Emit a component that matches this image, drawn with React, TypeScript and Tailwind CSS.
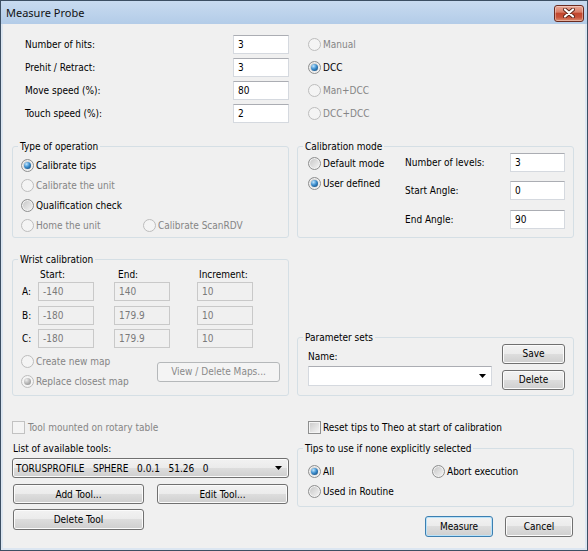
import React from "react";

function Radio({ label, checked, disabled }: { label: string; checked?: boolean; disabled?: boolean }) {
  return (
    <div className="flex items-center h-full">
      <span
        className={
          disabled
            ? "shrink-0 flex items-center justify-center w-[13px] h-[13px] rounded-full border border-[#bdbdbd] bg-[#f4f4f4]"
            : "shrink-0 flex items-center justify-center w-[13px] h-[13px] rounded-full border border-[#8e8f8f] bg-[linear-gradient(135deg,#c4c4c4,#f6f6f6)] shadow-[inset_0_0_0_1px_#f2f2f2]"
        }
      >
        {checked ? (
          <span
            className={
              disabled
                ? "w-[7px] h-[7px] rounded-full bg-[radial-gradient(circle_at_35%_30%,#ececec,#a6a6a6_65%,#8c8c8c)]"
                : "w-[7px] h-[7px] rounded-full bg-[radial-gradient(circle_at_35%_30%,#bfe6ff,#3b8dcd_45%,#0d3a66)]"
            }
          />
        ) : null}
      </span>
      <span className={disabled ? "ml-[2px] text-[#858585] whitespace-nowrap" : "ml-[2px] text-black whitespace-nowrap"}>{label}</span>
    </div>
  );
}

function TextBox({ value, className, disabled }: { value: string; className: string; disabled?: boolean }) {
  return (
    <div
      className={
        (disabled
          ? "h-[19px] flex items-center pl-[4px] bg-[#f0f0f0] border border-[#c9c9c9] text-[#7a7a7a] "
          : "h-[19px] flex items-center pl-[4px] bg-white border border-[#d5d9df] border-t-[#abadb3] text-black ") + className
      }
    >
      {value}
    </div>
  );
}

function Btn({ label, className, disabled, def }: { label: string; className: string; disabled?: boolean; def?: boolean }) {
  let base = "flex items-center justify-center rounded-[3px] border whitespace-nowrap ";
  if (disabled) base += "border-[#b5b8ba] bg-[#f4f4f4] text-[#8a8a8a] ";
  else if (def)
    base +=
      "border-[#3c7fb1] bg-[linear-gradient(to_bottom,#f2f2f2_0%,#ebebeb_50%,#dddddd_50%,#cfcfcf_100%)] shadow-[inset_0_0_0_1px_#b9e2f9] text-black ";
  else
    base +=
      "border-[#707070] bg-[linear-gradient(to_bottom,#f2f2f2_0%,#ebebeb_50%,#dddddd_50%,#cfcfcf_100%)] shadow-[inset_0_0_0_1px_#fbfbfb] text-black ";
  return <div className={base + className}>{label}</div>;
}

function Arrow() {
  return (
    <svg width="7" height="4" viewBox="0 0 7 4">
      <path d="M0 0H7L3.5 4Z" fill="#000" />
    </svg>
  );
}

function Legend({ children }: { children: React.ReactNode }) {
  return <legend className="ml-[5px] px-[2px] leading-[13px] text-black">{children}</legend>;
}

export default function App() {
  return (
    <div className="w-[588px] h-[551px] flex flex-col bg-[#f0f0f0] border border-[#3c4f63] text-[10px] leading-[13px] text-black font-['DejaVu_Sans_Condensed','DejaVu_Sans',sans-serif]">
      {/* Title bar */}
      <div className="h-[23px] shrink-0 flex items-center justify-between pl-[5px] pr-[3px] bg-[linear-gradient(to_bottom,#c8dbf0,#b3cce8)]">
        <span className="font-['Noto_Sans','Open_Sans',sans-serif] text-[11px] leading-[16px] text-[#111]">Measure Probe</span>
        <div className="w-[30px] h-[17px] mt-[1px] rounded-[3px] border border-[#6a2b20] flex items-center justify-center bg-[linear-gradient(to_bottom,#e9a896_0%,#d97f69_40%,#c2472e_50%,#c7523a_75%,#dd8e70_100%)] shadow-[inset_0_0_0_1px_rgba(255,255,255,0.35)]">
          <svg width="12" height="10" viewBox="0 0 12 10">
            <path d="M2 1.5L10 8.5M10 1.5L2 8.5" stroke="#5a2418" strokeWidth="4" strokeLinecap="round" />
            <path d="M2 1.5L10 8.5M10 1.5L2 8.5" stroke="#ffffff" strokeWidth="2.2" strokeLinecap="round" />
          </svg>
        </div>
      </div>

      {/* Body */}
      <div className="flex-1 flex flex-col border-x-2 border-b-2 border-[#dce6f1] pl-[9px] pt-[11px]">
        {/* Row 1 */}
        <div className="flex gap-[8px]">
          <div className="w-[277px] flex flex-col gap-[4px]">
            {[
              ["Number of hits:", "3"],
              ["Prehit / Retract:", "3"],
              ["Move speed (%):", "80"],
              ["Touch speed (%):", "2"],
            ].map(([l, v]) => (
              <div key={l} className="flex items-center h-[19px]">
                <span className="flex-1 pl-[13px]">{l}</span>
                <TextBox value={v} className="w-[56px]" />
              </div>
            ))}
          </div>
          <div className="w-[277px] pl-[11px] flex flex-col gap-[4px]">
            <div className="h-[19px]">
              <Radio label="Manual" disabled />
            </div>
            <div className="h-[19px]">
              <Radio label="DCC" checked />
            </div>
            <div className="h-[19px]">
              <Radio label="Man+DCC" disabled />
            </div>
            <div className="h-[19px]">
              <Radio label="DCC+DCC" disabled />
            </div>
          </div>
        </div>

        {/* Row 2 */}
        <div className="flex gap-[8px] mt-[16.5px]">
          <fieldset className="w-[277px] h-[98.5px] border border-[#d5dfe5] rounded-[3px] p-0 m-0">
            <Legend>Type of operation</Legend>
            <div className="pt-[2.5px] pl-[8px] flex flex-col">
              <div className="h-[20px]">
                <Radio label="Calibrate tips" checked />
              </div>
              <div className="h-[20px]">
                <Radio label="Calibrate the unit" disabled />
              </div>
              <div className="h-[20px]">
                <Radio label="Qualification check" />
              </div>
              <div className="h-[20px] flex">
                <div className="w-[122px]">
                  <Radio label="Home the unit" disabled />
                </div>
                <div>
                  <Radio label="Calibrate ScanRDV" disabled />
                </div>
              </div>
            </div>
          </fieldset>
          <fieldset className="w-[277px] h-[98.5px] border border-[#d5dfe5] rounded-[3px] p-0 m-0">
            <Legend>Calibration mode</Legend>
            <div className="flex">
              <div className="w-[107px] pl-[10px] pt-[0.5px] flex flex-col">
                <div className="h-[20px]">
                  <Radio label="Default mode" />
                </div>
                <div className="h-[20px]">
                  <Radio label="User defined" checked />
                </div>
              </div>
              <div className="flex flex-col gap-[9.5px]">
                {[
                  ["Number of levels:", "3"],
                  ["Start Angle:", "0"],
                  ["End Angle:", "90"],
                ].map(([l, v]) => (
                  <div key={l} className="flex items-center h-[19px]">
                    <span className="w-[105px]">{l}</span>
                    <TextBox value={v} className="w-[55px]" />
                  </div>
                ))}
              </div>
            </div>
          </fieldset>
        </div>

        {/* Row 3 */}
        <div className="flex gap-[8px] items-end mt-[14.5px]">
          <fieldset className="w-[277px] h-[143.5px] border border-[#d5dfe5] rounded-[3px] p-0 m-0">
            <Legend>Wrist calibration</Legend>
            <div className="pl-[9px] flex flex-col">
              <div className="mt-[2px] h-[13px] flex">
                <span className="w-[16px]" />
                <span className="w-[76px] pl-[2px]">Start:</span>
                <span className="w-[83px] pl-[4px]">End:</span>
                <span className="pl-[2px]">Increment:</span>
              </div>
              <div className="mt-[1.5px] flex flex-col gap-[4.5px]">
                {[
                  ["A:", "-140", "140", "10"],
                  ["B:", "-180", "179.9", "10"],
                  ["C:", "-180", "179.9", "10"],
                ].map(([l, a, b, c]) => (
                  <div key={l} className="flex items-center h-[19px]">
                    <span className="w-[16px]">{l}</span>
                    <TextBox value={a} className="w-[56px]" disabled />
                    <TextBox value={b} className="w-[56px] ml-[20px]" disabled />
                    <TextBox value={c} className="w-[56px] ml-[27px]" disabled />
                  </div>
                ))}
              </div>
              <div className="mt-[3.5px] flex items-center">
                <div className="w-[136px] ml-[-1px] flex flex-col">
                  <div className="h-[20px]">
                    <Radio label="Create new map" disabled />
                  </div>
                  <div className="h-[20px]">
                    <Radio label="Replace closest map" checked disabled />
                  </div>
                </div>
                <Btn label="View / Delete Maps..." className="w-[123px] h-[20px]" disabled />
              </div>
            </div>
          </fieldset>
          <fieldset className="w-[277px] h-[65.5px] border border-[#d5dfe5] rounded-[3px] p-0 m-0">
            <Legend>Parameter sets</Legend>
            <div className="flex justify-between pl-[10px] pr-[8px]">
              <div className="flex flex-col">
                <span className="mt-[6px] h-[13px]">Name:</span>
                <div className="mt-[3.5px] w-[184px] h-[20px] bg-white border border-[#d5d9df] border-t-[#abadb3] flex items-center justify-end pr-[5px]">
                  <Arrow />
                </div>
              </div>
              <div className="flex flex-col gap-[6px]">
                <Btn label="Save" className="w-[63px] h-[20px]" />
                <Btn label="Delete" className="w-[63px] h-[20px]" />
              </div>
            </div>
          </fieldset>
        </div>

        {/* Row 4 */}
        <div className="flex gap-[8px] mt-[25px]">
          <div className="w-[277px] flex flex-col">
            <div className="h-[13px] flex items-center">
              <span className="w-[13px] h-[13px] border border-[#c2c2c2] bg-[#f4f4f4]" />
              <span className="ml-[3px] text-[#858585]">Tool mounted on rotary table</span>
            </div>
            <span className="mt-[7.5px] h-[13px] pl-[1px]">List of available tools:</span>
            <div className="mt-[3.5px] w-[277px] h-[20px] rounded-[3px] border border-[#707070] bg-[linear-gradient(to_bottom,#f2f2f2_0%,#ebebeb_50%,#dddddd_50%,#cfcfcf_100%)] shadow-[inset_0_0_0_1px_#fbfbfb] flex items-center justify-between pl-[3px] pr-[6px]">
              <span className="whitespace-pre">{"TORUSPROFILE   SPHERE   0.0.1   51.26   0"}</span>
              <Arrow />
            </div>
            <div className="mt-[6px] flex">
              <Btn label="Add Tool..." className="ml-[1px] w-[131px] h-[20px]" />
              <Btn label="Edit Tool..." className="ml-[13px] w-[131px] h-[20px]" />
            </div>
            <Btn label="Delete Tool" className="mt-[5px] ml-[1px] w-[131px] h-[21px]" />
          </div>
          <div className="w-[277px] flex flex-col">
            <div className="h-[13px] pl-[11px] flex items-center">
              <span className="w-[13px] h-[13px] border border-[#8e8f8f] bg-[linear-gradient(135deg,#c9c9c9,#f7f7f7)] shadow-[inset_0_0_0_1px_#f4f4f4]" />
              <span className="ml-[2px]">Reset tips to Theo at start of calibration</span>
            </div>
            <fieldset className="mt-[7.5px] w-[277px] h-[65.5px] border border-[#d5dfe5] rounded-[3px] p-0 m-0">
              <Legend>Tips to use if none explicitly selected</Legend>
              <div className="pl-[10px] pt-[6.5px] grid grid-cols-[124px_1fr]">
                <div className="h-[20px]">
                  <Radio label="All" checked />
                </div>
                <div className="h-[20px]">
                  <Radio label="Abort execution" />
                </div>
                <div className="h-[20px]">
                  <Radio label="Used in Routine" />
                </div>
              </div>
            </fieldset>
            <div className="mt-[9px] pr-[1px] flex justify-end gap-[12px]">
              <Btn label="Measure" className="w-[68px] h-[21px]" def />
              <Btn label="Cancel" className="w-[68px] h-[21px]" />
            </div>
          </div>
        </div>
      </div>
    </div>
  );
}
